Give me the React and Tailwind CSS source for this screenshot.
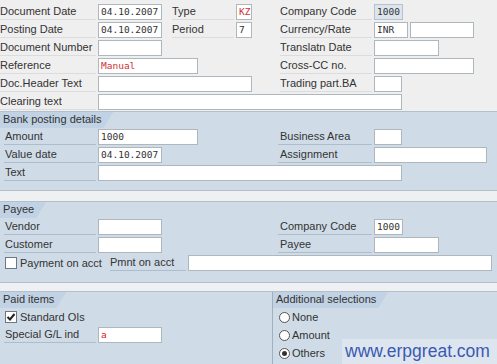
import React from "react";

// SAP-style field label with the thin line under it
const Lbl = ({ className = "", children }) => (
  <div className={`h-[16px] leading-[15px] whitespace-nowrap overflow-hidden text-[#333] border-b ${className}`}>
    {children}
  </div>
);

const Fld = ({ className = "", children }) => (
  <div
    className={`h-[16px] border border-[#aeb6be] pl-[2px] font-['DejaVu_Sans_Mono',monospace] text-[9.5px] leading-[14px] text-[#333] whitespace-nowrap overflow-hidden ${className}`}
  >
    {children}
  </div>
);

const Row = ({ className = "", children }) => (
  <div className={`flex items-center h-[18px] ${className}`}>{children}</div>
);

const Tab = ({ className = "", children }) => (
  <div
    className={`h-[16px] leading-[15px] pl-[3px] pr-[12px] bg-[#c0d2e4] text-[#333] whitespace-nowrap [clip-path:polygon(0_0,100%_0,calc(100%-10px)_100%,0_100%)] ${className}`}
  >
    {children}
  </div>
);

const Check = ({ checked }) => (
  <div className="w-[12px] h-[12px] border border-[#6c7885] bg-white flex items-center justify-center">
    {checked && (
      <svg width="10" height="10" viewBox="0 0 10 10">
        <path d="M1.5 5 L4 7.5 L8.5 2" fill="none" stroke="#222" strokeWidth="2" />
      </svg>
    )}
  </div>
);

const Radio = ({ on }) => (
  <div className="w-[11px] h-[11px] rounded-full border border-[#555] bg-white flex items-center justify-center">
    {on && <div className="w-[5px] h-[5px] rounded-full bg-[#333]" />}
  </div>
);

export default function App() {
  const gray = "border-[#dcdcdc]";
  const blue = "border-[#aebdcb]";

  return (
    <div className="w-[497px] h-[364px] overflow-hidden bg-[#efefef] font-['Liberation_Sans',Arial,sans-serif] text-[11px]">
      {/* header fields */}
      <div className="pt-[3px] h-[111px]">
        <Row>
          <Lbl className={`w-[96px] ${gray}`}>Document Date</Lbl>
          <Fld className="ml-[2px] w-[64px] bg-white">04.10.2007</Fld>
          <Lbl className={`ml-[10px] w-[62px] ${gray}`}>Type</Lbl>
          <Fld className="ml-[2px] w-[16px] bg-white text-[#d03030]">KZ</Fld>
          <Lbl className={`ml-[28px] w-[92px] ${gray}`}>Company Code</Lbl>
          <Fld className="ml-[2px] w-[29px] bg-[#dce5ee] border-[#b7c2cd]">1000</Fld>
        </Row>
        <Row>
          <Lbl className={`w-[96px] ${gray}`}>Posting Date</Lbl>
          <Fld className="ml-[2px] w-[64px] bg-white">04.10.2007</Fld>
          <Lbl className={`ml-[10px] w-[62px] ${gray}`}>Period</Lbl>
          <Fld className="ml-[2px] w-[16px] bg-white">7</Fld>
          <Lbl className={`ml-[28px] w-[92px] ${gray}`}>Currency/Rate</Lbl>
          <Fld className="ml-[2px] w-[34px] bg-white">INR</Fld>
          <Fld className="ml-[2px] w-[64px] bg-white" />
        </Row>
        <Row>
          <Lbl className={`w-[96px] ${gray}`}>Document Number</Lbl>
          <Fld className="ml-[2px] w-[64px] bg-white" />
          <Lbl className={`ml-[118px] w-[92px] ${gray}`}>Translatn Date</Lbl>
          <Fld className="ml-[2px] w-[65px] bg-white" />
        </Row>
        <Row>
          <Lbl className={`w-[96px] ${gray}`}>Reference</Lbl>
          <Fld className="ml-[2px] w-[100px] bg-white text-[#d03030]">Manual</Fld>
          <Lbl className={`ml-[82px] w-[92px] ${gray}`}>Cross-CC no.</Lbl>
          <Fld className="ml-[2px] w-[100px] bg-white" />
        </Row>
        <Row>
          <Lbl className={`w-[96px] ${gray}`}>Doc.Header Text</Lbl>
          <Fld className="ml-[2px] w-[154px] bg-white" />
          <Lbl className={`ml-[28px] w-[92px] ${gray}`}>Trading part.BA</Lbl>
          <Fld className="ml-[2px] w-[28px] bg-white" />
        </Row>
        <Row>
          <Lbl className={`w-[96px] ${gray}`}>Clearing text</Lbl>
          <Fld className="ml-[2px] w-[304px] bg-white" />
        </Row>
      </div>

      {/* Bank posting details */}
      <div className="h-[80px] bg-[#cfdce8] border-t border-b border-[#b3c0cc]">
        <div className="flex">
          <Tab>Bank posting details</Tab>
        </div>
        <Row>
          <Lbl className={`ml-[4px] w-[92px] pl-[1px] ${blue}`}>Amount</Lbl>
          <Fld className="ml-[2px] w-[100px] bg-white">1000</Fld>
          <Lbl className={`ml-[80px] w-[94px] pl-[2px] ${blue}`}>Business Area</Lbl>
          <Fld className="ml-[2px] w-[28px] bg-white" />
        </Row>
        <Row>
          <Lbl className={`ml-[4px] w-[92px] pl-[1px] ${blue}`}>Value date</Lbl>
          <Fld className="ml-[2px] w-[64px] bg-white">04.10.2007</Fld>
          <Lbl className={`ml-[116px] w-[94px] pl-[2px] ${blue}`}>Assignment</Lbl>
          <Fld className="ml-[2px] w-[113px] bg-white" />
        </Row>
        <Row>
          <Lbl className={`ml-[4px] w-[92px] pl-[1px] ${blue}`}>Text</Lbl>
          <Fld className="ml-[2px] w-[304px] bg-white" />
        </Row>
      </div>

      <div className="h-[10px] bg-[#eef0f2]" />

      {/* Payee */}
      <div className="h-[82px] bg-[#cfdce8] border-t border-b border-[#b3c0cc]">
        <div className="flex">
          <Tab>Payee</Tab>
        </div>
        <Row>
          <Lbl className={`ml-[4px] w-[92px] pl-[1px] ${blue}`}>Vendor</Lbl>
          <Fld className="ml-[2px] w-[64px] bg-white" />
          <Lbl className={`ml-[116px] w-[94px] pl-[2px] ${blue}`}>Company Code</Lbl>
          <Fld className="ml-[2px] w-[29px] bg-white">1000</Fld>
        </Row>
        <Row>
          <Lbl className={`ml-[4px] w-[92px] pl-[1px] ${blue}`}>Customer</Lbl>
          <Fld className="ml-[2px] w-[64px] bg-white" />
          <Lbl className={`ml-[116px] w-[94px] pl-[2px] ${blue}`}>Payee</Lbl>
          <Fld className="ml-[2px] w-[65px] bg-white" />
        </Row>
        <Row>
          <div className="w-[110px] flex items-center pl-[5px] gap-[3px] text-[#333] whitespace-nowrap">
            <Check />
            <span>Payment on acct</span>
          </div>
          <Lbl className={`w-[76px] ${blue}`}>Pmnt on acct</Lbl>
          <Fld className="ml-[2px] w-[304px] bg-white" />
        </Row>
      </div>

      <div className="h-[8px] bg-[#eef0f2]" />

      {/* Paid items + Additional selections */}
      <div className="relative h-[80px] bg-[#cfdce8] border-t border-[#b3c0cc] flex">
        <div className="w-[272px]">
          <div className="flex">
            <Tab>Paid items</Tab>
          </div>
          <Row className="pl-[5px] gap-[3px] text-[#333]">
            <Check checked />
            <span>Standard OIs</span>
          </Row>
          <Row>
            <Lbl className={`ml-[4px] w-[92px] pl-[1px] ${blue}`}>Special G/L ind</Lbl>
            <Fld className="ml-[2px] w-[64px] bg-white text-[#e02020]">a</Fld>
          </Row>
        </div>
        <div className="flex-1 border-l border-[#9fb0c1]">
          <div className="flex">
            <Tab>Additional selections</Tab>
          </div>
          <Row className="pl-[6px] gap-[2px] text-[#333]">
            <Radio />
            <span>None</span>
          </Row>
          <Row className="pl-[6px] gap-[2px] text-[#333]">
            <Radio />
            <span>Amount</span>
          </Row>
          <Row className="pl-[6px] gap-[2px] text-[#333]">
            <Radio on />
            <span>Others</span>
          </Row>
        </div>

        {/* watermark */}
        <div className="absolute left-[342px] top-[47px] w-[155px] h-[26px] bg-[#dde6ef] pl-[3px] font-['Liberation_Sans',Arial,sans-serif] text-[17.5px] leading-[24px] text-[#3a59b3] whitespace-nowrap">
          www.erpgreat.com
        </div>
      </div>
    </div>
  );
}
